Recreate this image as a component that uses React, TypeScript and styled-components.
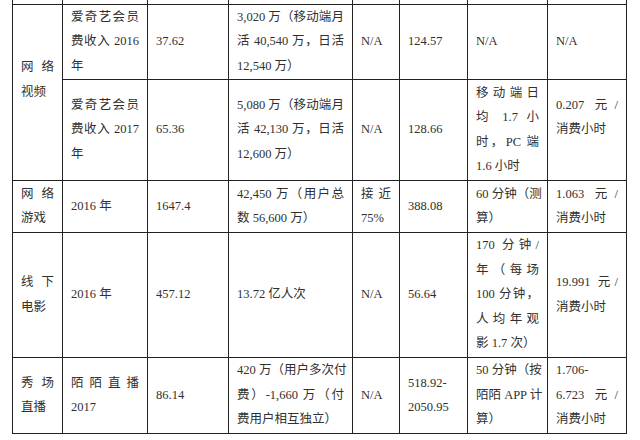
import React from 'react';
import styled, { createGlobalStyle } from 'styled-components';

const GlobalStyle = createGlobalStyle`
  html, body {
    margin: 0;
    padding: 0;
    background: #ffffff;
  }
  body {
    width: 640px;
    height: 440px;
    overflow: hidden;
  }
`;

const Page = styled.div`
  padding-left: 12px;
`;

const Table = styled.table`
  table-layout: fixed;
  border-collapse: collapse;
  width: 614px;
  font-family: 'Liberation Serif', 'Noto Sans CJK SC', serif;
  font-size: 12.5px;
  color: #303030;
`;

const Row = styled.tr<{ $h: number }>`
  height: ${({ $h }) => $h}px;
`;

const Cell = styled.td<{ $stub?: boolean }>`
  border: 1px solid #222222;
  border-top: ${({ $stub }) => ($stub ? 'none' : '1px solid #222222')};
  padding: 0 8px;
  vertical-align: middle;
  overflow: hidden;
`;

const Line = styled.div<{ $j?: boolean }>`
  line-height: 24.5px;
  min-height: 24.5px;
  white-space: nowrap;
  text-align: ${({ $j }) => ($j ? 'justify' : 'left')};
  text-align-last: ${({ $j }) => ($j ? 'justify' : 'left')};
`;

type Ln = string | { j: string };
type CellData = { lines: Ln[]; rowSpan?: number };

const J = (j: string): Ln => ({ j });
const c = (lines: Ln[], rowSpan?: number): CellData => ({ lines, rowSpan });

const widths = [50, 85, 81, 124, 47, 68, 80, 79];

const rows: { h: number; cells: CellData[] }[] = [
  {
    h: 75,
    cells: [
      c([J('网 络'), '视频', ''], 2),
      c([J('爱奇艺会员'), J('费收入 2016'), '年']),
      c(['37.62']),
      c([J('3,020 万（移动端月'), J('活 40,540 万，日活'), '12,540 万）']),
      c(['N/A']),
      c(['124.57']),
      c(['N/A']),
      c(['N/A']),
    ],
  },
  {
    h: 101,
    cells: [
      c([J('爱奇艺会员'), J('费收入 2017'), '年']),
      c(['65.36']),
      c([J('5,080 万（移动端月'), J('活 42,130 万，日活'), '12,600 万）']),
      c(['N/A']),
      c(['128.66']),
      c([J('移动端日'), J('均 1.7 小'), J('时，PC 端'), '1.6 小时']),
      c([J('0.207 元/'), '消费小时', '']),
    ],
  },
  {
    h: 52,
    cells: [
      c([J('网 络'), '游戏']),
      c(['2016 年']),
      c(['1647.4']),
      c([J('42,450 万（用户总'), '数 56,600 万）']),
      c([J('接 近'), '75%']),
      c(['388.08']),
      c([J('60 分钟（测'), '算）']),
      c([J('1.063 元/'), '消费小时']),
    ],
  },
  {
    h: 125,
    cells: [
      c([J('线 下'), '电影']),
      c(['2016 年']),
      c(['457.12']),
      c(['13.72 亿人次']),
      c(['N/A']),
      c(['56.64']),
      c([J('170 分钟/'), J('年（每场'), J('100 分钟，'), J('人均年观'), '影 1.7 次）']),
      c([J('19.991 元/'), '消费小时']),
    ],
  },
  {
    h: 76,
    cells: [
      c([J('秀 场'), '直播']),
      c([J('陌陌直播'), '2017']),
      c(['86.14']),
      c([J('420 万（用户多次付'), J('费）-1,660 万（付'), '费用户相互独立）']),
      c(['N/A']),
      c(['518.92-', '2050.95']),
      c([J('50 分钟（按'), J('陌陌 APP 计'), '算）']),
      c(['1.706-', J('6.723 元/'), '消费小时']),
    ],
  },
];

export default function App() {
  return (
    <>
      <GlobalStyle />
      <Page>
        <Table>
          <colgroup>
            {widths.map((w, i) => (
              <col key={i} style={{ width: w }} />
            ))}
          </colgroup>
          <tbody>
            <Row $h={4}>
              {widths.map((_, i) => (
                <Cell key={i} $stub />
              ))}
            </Row>
            {rows.map((r, ri) => (
              <Row key={ri} $h={r.h}>
                {r.cells.map((cell, ci) => (
                  <Cell key={ci} rowSpan={cell.rowSpan}>
                    {cell.lines.map((l, li) =>
                      typeof l === 'string' ? (
                        <Line key={li}>{l}</Line>
                      ) : (
                        <Line key={li} $j>
                          {l.j}
                        </Line>
                      )
                    )}
                  </Cell>
                ))}
              </Row>
            ))}
          </tbody>
        </Table>
      </Page>
    </>
  );
}
